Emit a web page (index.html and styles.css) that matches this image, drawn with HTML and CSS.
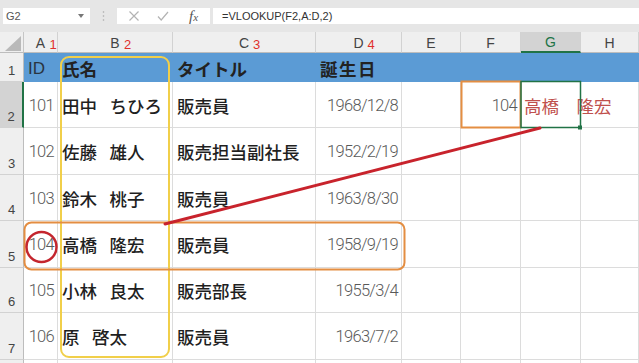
FILE: index.html
```html
<!DOCTYPE html>
<html lang="ja">
<head>
<meta charset="utf-8">
<title>VLOOKUP</title>
<link rel="stylesheet" href="styles.css">
</head>
<body>
<div class="app">
  <div class="toolbar">
    <div class="namebox"><span>G2</span><svg class="drop" width="6" height="4" viewBox="0 0 6 4"><path d="M0 0h6L3 4z" fill="#777"/></svg></div>
    <div class="grip"><svg width="3" height="12" viewBox="0 0 3 12"><circle cx="1.5" cy="2" r="0.8" fill="#aaa"/><circle cx="1.5" cy="6" r="0.8" fill="#aaa"/><circle cx="1.5" cy="10" r="0.8" fill="#aaa"/></svg></div>
    <div class="fbtns">
      <svg class="ic" width="12" height="12" viewBox="0 0 12 12"><path d="M1.5 1.5l9 9M10.5 1.5l-9 9" stroke="#b3b3b3" stroke-width="1.2" fill="none"/></svg>
      <svg class="ic" width="12" height="12" viewBox="0 0 12 12"><path d="M1 6.5l3.2 3.5L11 2" stroke="#b3b3b3" stroke-width="1.2" fill="none"/></svg>
      <span class="fx">f<small>x</small></span>
    </div>
    <div class="formula">=VLOOKUP(F2,A:D,2)</div>
  </div>
  <div class="sheet">
    <div class="corner"><svg width="16" height="15" viewBox="0 0 16 15"><path d="M16 0V15H0z" fill="#b9b9b9"/></svg></div>
    <div class="ch">A<span class="note">1</span></div>
    <div class="ch">B<span class="note">2</span></div>
    <div class="ch">C<span class="note">3</span></div>
    <div class="ch">D<span class="note">4</span></div>
    <div class="ch">E</div>
    <div class="ch">F</div>
    <div class="ch sel">G</div>
    <div class="ch">H</div>

    <div class="rh">1</div>
    <div class="c hd id">ID</div>
    <div class="c hd jp">氏名</div>
    <div class="c hd jp">タイトル</div>
    <div class="c hd jp wide">誕生日</div>
    <div class="c hd"></div><div class="c hd"></div><div class="c hd"></div><div class="c hd"></div>

    <div class="rh sel">2</div>
    <div class="c num">101</div>
    <div class="c jp">田中<span class="sp">　</span>ちひろ</div>
    <div class="c jp">販売員</div>
    <div class="c num">1968/12/8</div>
    <div class="c"></div>
    <div class="c num">104</div>
    <div class="c res">高橋　隆宏</div>
    <div class="c"></div>

    <div class="rh">3</div>
    <div class="c num">102</div>
    <div class="c jp">佐藤<span class="sp">　</span>雄人</div>
    <div class="c jp">販売担当副社長</div>
    <div class="c num">1952/2/19</div>
    <div class="c"></div><div class="c"></div><div class="c"></div><div class="c"></div>

    <div class="rh">4</div>
    <div class="c num">103</div>
    <div class="c jp">鈴木<span class="sp">　</span>桃子</div>
    <div class="c jp">販売員</div>
    <div class="c num">1963/8/30</div>
    <div class="c"></div><div class="c"></div><div class="c"></div><div class="c"></div>

    <div class="rh">5</div>
    <div class="c num">104</div>
    <div class="c jp">高橋<span class="sp">　</span>隆宏</div>
    <div class="c jp">販売員</div>
    <div class="c num">1958/9/19</div>
    <div class="c"></div><div class="c"></div><div class="c"></div><div class="c"></div>

    <div class="rh">6</div>
    <div class="c num">105</div>
    <div class="c jp">小林<span class="sp">　</span>良太</div>
    <div class="c jp">販売部長</div>
    <div class="c num">1955/3/4</div>
    <div class="c"></div><div class="c"></div><div class="c"></div><div class="c"></div>

    <div class="rh">7</div>
    <div class="c num">106</div>
    <div class="c jp">原<span class="sp">　</span>啓太</div>
    <div class="c jp">販売員</div>
    <div class="c num">1963/7/2</div>
    <div class="c"></div><div class="c"></div><div class="c"></div><div class="c"></div>

    <div class="rh"></div>
    <div class="c"></div><div class="c"></div><div class="c"></div><div class="c"></div>
    <div class="c"></div><div class="c"></div><div class="c"></div><div class="c"></div>
  </div>

  <svg class="marks" width="639" height="363" viewBox="0 0 639 363">
    <rect x="61" y="57" width="108" height="300" rx="8" fill="none" stroke="#f1cf4a" stroke-width="2"/>
    <rect x="24.5" y="222.5" width="380" height="47" rx="7" fill="none" stroke="#e48e42" stroke-width="2"/>
    <rect x="461.5" y="81.5" width="59" height="46" fill="none" stroke="#e48e42" stroke-width="2"/>
    <rect x="521" y="81.5" width="59.5" height="46" fill="none" stroke="#217346" stroke-width="1.5"/>
    <rect x="578" y="125.5" width="4" height="4" fill="#217346"/>
    <circle cx="41.5" cy="247" r="15" fill="none" stroke="#c4262e" stroke-width="2.5"/>
    <line x1="165" y1="224" x2="540" y2="128" stroke="#c8232c" stroke-width="3" stroke-linecap="round"/>
  </svg>
</div>
</body>
</html>
```
FILE: styles.css
```css
body {
  margin: 0;
  background: #fff;
  font-family: "Noto Sans CJK JP", "Noto Sans", sans-serif;
}
.app {
  position: relative;
  width: 639px;
  height: 363px;
  overflow: hidden;
}
.toolbar {
  height: 32px;
  box-sizing: border-box;
  padding: 8px 0 0 3px;
  background: #e6e6e6;
  display: flex;
  align-items: flex-start;
}
.namebox {
  width: 87px;
  height: 16px;
  background: #fff;
  display: flex;
  align-items: center;
  justify-content: space-between;
  padding: 0 6px 0 3px;
  box-sizing: border-box;
  font: 11px "Liberation Sans", sans-serif;
  color: #555;
}
.grip {
  width: 27px;
  height: 16px;
  display: flex;
  align-items: center;
  justify-content: center;
}
.fbtns {
  width: 93px;
  height: 16px;
  background: #fff;
  display: flex;
  align-items: center;
  padding-left: 11px;
  gap: 17px;
  box-sizing: border-box;
}
.fx {
  font: italic 15px "Liberation Serif", serif;
  color: #555;
  margin-left: 3px;
  line-height: 16px;
}
.fx small { font-size: 11px; }
.formula {
  margin-left: 3px;
  flex: 1;
  height: 16px;
  background: #fff;
  padding-left: 9px;
  font: 11px "Liberation Sans", sans-serif;
  line-height: 16px;
  color: #333;
  white-space: nowrap;
}
.sheet {
  display: grid;
  grid-template-columns: 24px 34px 115px 143px 86px 59px 60px 60px 58px;
  grid-template-rows: 21px 29px 46px 47px 46px 47px 45px 47px 10px;
}
.corner {
  background: #efefef;
  border-right: 1px solid #c6c6c6;
  border-bottom: 1px solid #bdbdbd;
  box-sizing: border-box;
  display: flex;
  align-items: flex-end;
  justify-content: flex-end;
  padding: 0 2px 1px 0;
}
.ch {
  position: relative;
  background: #efefef;
  border-right: 1px solid #d2d2d2;
  border-bottom: 1px solid #bdbdbd;
  box-sizing: border-box;
  display: flex;
  align-items: center;
  justify-content: center;
  font: 14px "Liberation Sans", sans-serif;
  color: #444;
  padding-top: 1px;
}
.ch.sel {
  background: #d3d3d3;
  border-bottom: 2px solid #217346;
  color: #217346;
}
.note {
  position: absolute;
  left: calc(50% + 9px);
  top: 5px;
  font-size: 13px;
  color: #e0302c;
}
.rh {
  background: #efefef;
  border-right: 1px solid #bdbdbd;
  border-bottom: 1px solid #d2d2d2;
  box-sizing: border-box;
  display: flex;
  align-items: flex-end;
  justify-content: center;
  padding-bottom: 3px;
  font: 13px "Liberation Sans", sans-serif;
  color: #444;
}
.rh.sel {
  background: #d3d3d3;
  border-right: 2px solid #217346;
}
.c {
  border-right: 1px solid #dcdcdc;
  border-bottom: 1px solid #dcdcdc;
  box-sizing: border-box;
  display: flex;
  align-items: center;
  padding: 1px 4px 0;
  white-space: nowrap;
  overflow: visible;
  min-width: 0;
}
.c.hd {
  background: #5b9bd5;
  border-color: transparent;
  padding-top: 3px;
  color: #222;
}
.c.id {
  font: 17px "Liberation Sans", sans-serif;
  color: #2a3440;
}
.c.jp {
  font-size: 17.5px;
  font-weight: 500;
  color: #1f1f1f;
}
.c.hd.jp { font-weight: 700; color: #222; }
.sp { letter-spacing: -5px; }
.c.wide { letter-spacing: 1.5px; }
.c.num {
  justify-content: flex-end;
  padding-right: 3px;
  font-family: "Roboto", "Liberation Sans", sans-serif;
  font-weight: 300;
  font-size: 16.5px;
  letter-spacing: -0.7px;
  color: #595959;
}
.c.res {
  font-size: 17.5px;
  color: #c0504d;
  padding-left: 3px;
}
.marks {
  position: absolute;
  left: 0;
  top: 0;
  pointer-events: none;
}
```
